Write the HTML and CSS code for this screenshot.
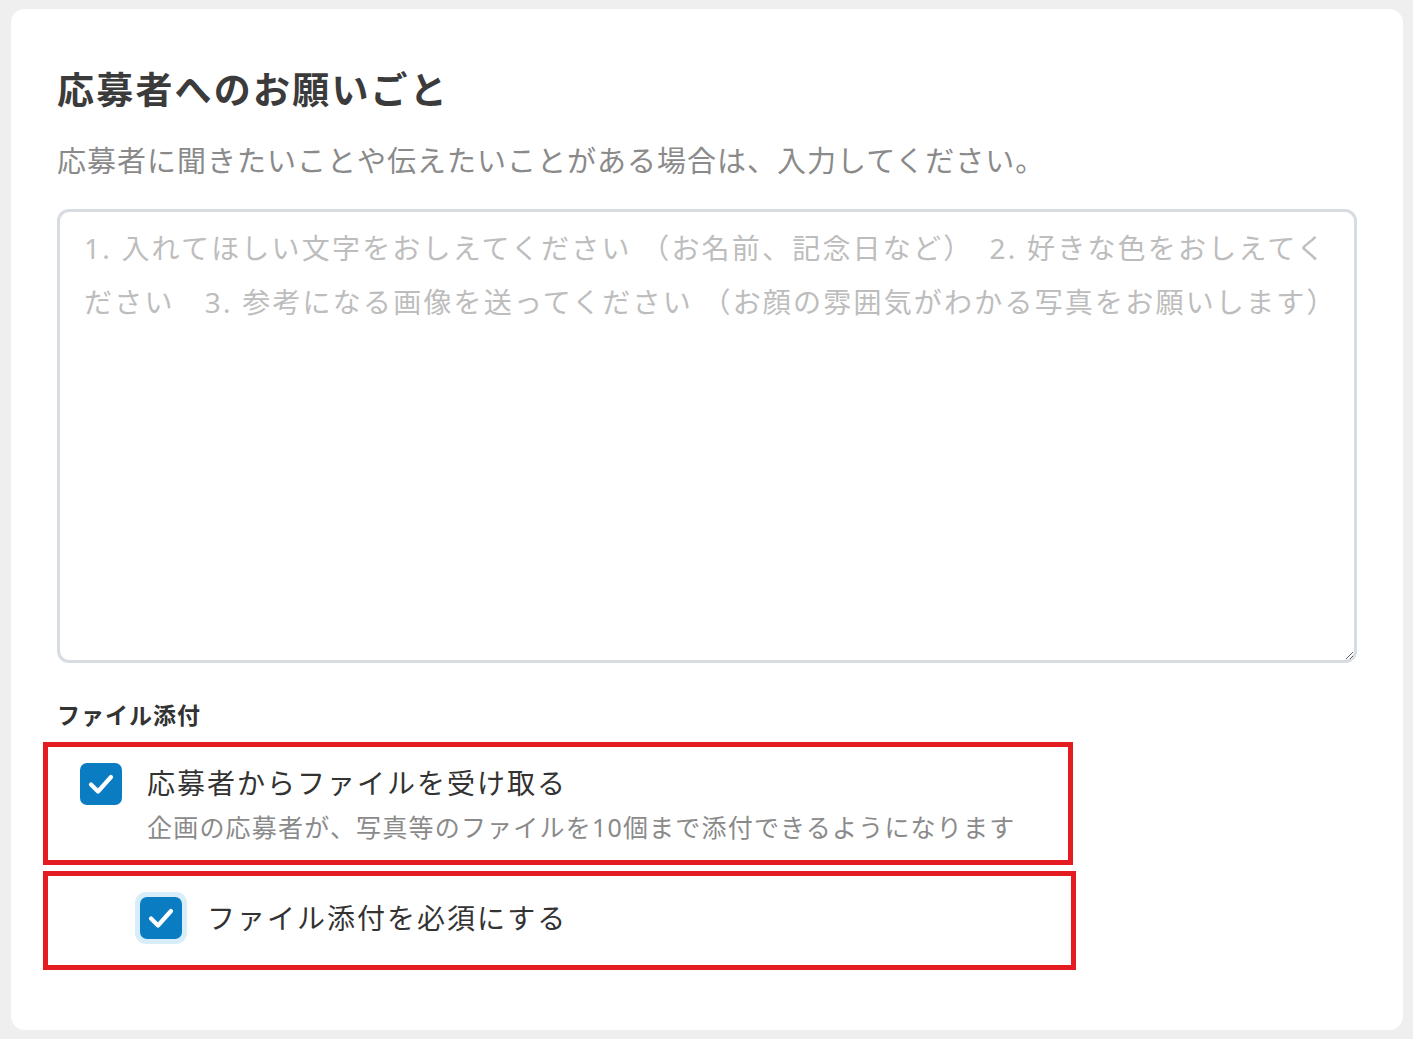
FILE: index.html
```html
<!DOCTYPE html>
<html lang="ja">
<head>
<meta charset="utf-8">
<link rel="stylesheet" href="styles.css">
</head>
<body>
<div class="card">
  <h2 class="title">応募者へのお願いごと</h2>
  <p class="lead">応募者に聞きたいことや伝えたいことがある場合は、入力してください。</p>
  <textarea class="memo" placeholder="1. 入れてほしい文字をおしえてください （お名前、記念日など）　2. 好きな色をおしえてください　3. 参考になる画像を送ってください （お顔の雰囲気がわかる写真をお願いします）"></textarea>
  <div class="label">ファイル添付</div>
  <div class="mark mark1">
    <div class="row">
      <span class="check"><svg viewBox="0 0 42 42" width="42" height="42"><path d="M11 21.5 L18 28.5 L31 14" fill="none" stroke="#fff" stroke-width="4.2" stroke-linecap="round" stroke-linejoin="round"/></svg></span>
      <div class="texts">
        <div class="opt">応募者からファイルを受け取る</div>
        <div class="desc">企画の応募者が、写真等のファイルを10個まで添付できるようになります</div>
      </div>
    </div>
  </div>
  <div class="mark mark2">
    <div class="row row2">
      <span class="ring"><span class="check"><svg viewBox="0 0 42 42" width="42" height="42"><path d="M11 21.5 L18 28.5 L31 14" fill="none" stroke="#fff" stroke-width="4.2" stroke-linecap="round" stroke-linejoin="round"/></svg></span></span>
      <div class="opt">ファイル添付を必須にする</div>
    </div>
  </div>
</div>
</body>
</html>
```
FILE: styles.css
```css
html, body {
  margin: 0;
  padding: 0;
  background: #efefef;
}
body {
  padding: 9px 10px 9px 11px;
  font-family: "Noto Sans", "Noto Sans CJK JP", sans-serif;
}
.card {
  background: #fff;
  border-radius: 14px;
  padding: 57px 46px 60px 46px;
  display: flex;
  flex-direction: column;
  box-sizing: border-box;
}
.title {
  margin: 0;
  font-size: 37px;
  line-height: 48px;
  font-weight: 700;
  color: #3b3b3b;
  letter-spacing: 2.2px;
}
.lead {
  margin: 27px 0 0 0;
  font-size: 29px;
  line-height: 40px;
  color: #8a8a8a;
  letter-spacing: 1px;
}
.memo {
  margin: 28px 0 0 0;
  height: 454px;
  box-sizing: border-box;
  border: 3px solid #d6dce1;
  border-radius: 12px;
  padding: 9px 24px;
  font-family: "Noto Sans", "Noto Sans CJK JP", sans-serif;
  font-size: 28px;
  line-height: 54px;
  letter-spacing: 2.2px;
  color: #333;
  resize: vertical;
  outline: none;
}
.memo::placeholder {
  color: #bdbdbd;
}
.label {
  margin-top: 36px;
  font-size: 23px;
  line-height: 32px;
  font-weight: 700;
  color: #333;
  letter-spacing: 1px;
}
.mark {
  border: 5px solid #e41b21;
  margin-left: -14px;
  box-sizing: border-box;
}
.mark1 {
  margin-top: 11px;
  width: 1030px;
  padding: 16px 20px 16px 32px;
}
.mark2 {
  margin-top: 6px;
  width: 1033px;
  padding: 16px 20px 21px 87px;
}
.row {
  display: flex;
  align-items: flex-start;
  gap: 25px;
}
.row2 {
  align-items: center;
  gap: 20px;
}
.check {
  width: 42px;
  height: 42px;
  border-radius: 7px;
  background: #0a7cc2;
  display: block;
  flex: none;
}
.check svg {
  display: block;
}
.ring {
  display: block;
  padding: 5px;
  border-radius: 11px;
  background: #d8edfa;
  flex: none;
}
.texts {
  display: flex;
  flex-direction: column;
}
.opt {
  font-size: 28px;
  line-height: 40px;
  color: #333;
  letter-spacing: 2px;
}
.desc {
  margin-top: 7px;
  font-size: 25px;
  line-height: 34px;
  color: #8a8a8a;
  letter-spacing: 1.2px;
}
```
